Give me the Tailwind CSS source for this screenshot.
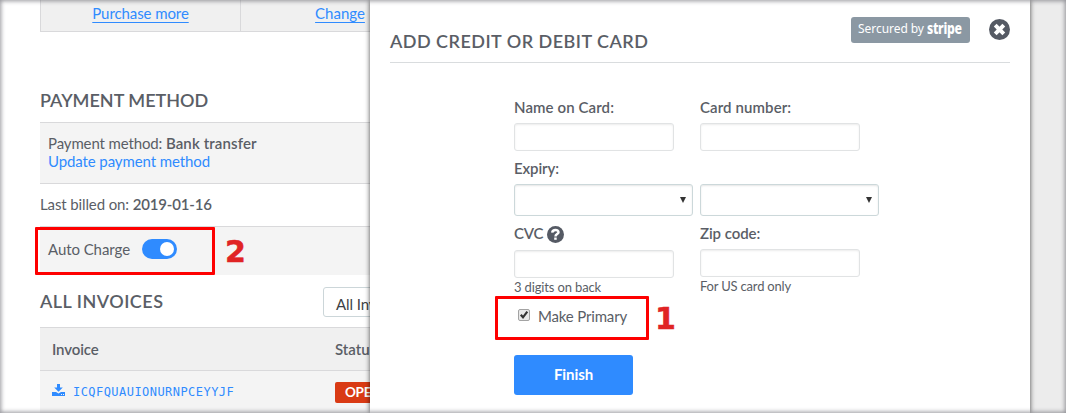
<!DOCTYPE html>
<html lang="en">
<head>
<meta charset="utf-8">
<title>Billing</title>
<script src="https://cdn.jsdelivr.net/npm/@tailwindcss/browser@4"></script>
</head>
<body class="relative h-[413px] w-[1066px] overflow-hidden bg-white font-['Lato',sans-serif] text-[15px] leading-[18px] text-[#5a5e66]">

<!-- Billing page -->
<main class="flex h-full flex-col pl-10 *:shrink-0">
  <div class="flex h-8 border-b border-l border-[#d9d9db] bg-[#f0f0f0] text-[#2f8bff]">
    <div class="flex w-[200px] justify-center border-r border-[#d9d9db] pt-1"><a class="tracking-[-0.09px] underline underline-offset-3 [text-decoration-skip-ink:none]">Purchase more</a></div>
    <div class="flex w-[198px] justify-center pt-1"><a class="underline underline-offset-3 [text-decoration-skip-ink:none]">Change</a></div>
  </div>

  <h2 class="mt-[58px] h-8 text-[18px] leading-5 font-semibold">PAYMENT METHOD</h2>
  <section class="flex h-[62px] flex-col border-y border-[#d9d9db] bg-[#f4f4f4] pt-[11px] pl-2">
    <p class="tracking-[-0.13px]">Payment method: <b class="font-semibold tracking-[0.12px]">Bank transfer</b></p>
    <a class="tracking-[-0.1px] text-[#2f8bff]">Update payment method</a>
  </section>
  <p class="h-[42px] pt-[11px] tracking-[-0.12px]">Last billed on: <b class="font-semibold tracking-[-0.16px]">2019-01-16</b></p>
  <section class="flex h-[49px] items-start gap-3 border-t border-[#d9d9db] bg-[#f4f4f4] pt-3 pl-2">
    <span class="pt-px tracking-[-0.07px]">Auto Charge</span>
    <span class="flex h-5 w-[35px] items-center justify-end rounded-full bg-[#2f8bff] pr-[3px]"><span class="size-[14px] rounded-full bg-white"></span></span>
  </section>

  <div class="flex h-[52px] pt-3">
    <h2 class="w-[283px] pt-1 text-[18px] leading-5 font-semibold tracking-[0.48px]">ALL INVOICES</h2>
    <div class="h-[30px] w-[150px] rounded-[3px] border border-[#ccd6d9] bg-white pt-[7px] pl-3 tracking-[-0.1px] text-[#3c3f45]">All Invoices</div>
  </div>
  <div class="flex h-11 items-center border-y border-[#d9d9db] bg-[#f0f0f0] pb-px pl-3 font-semibold">
    <span class="w-[283px] tracking-[-0.1px]">Invoice</span><span>Status</span>
  </div>
  <div class="flex h-[42px] items-start bg-[#f4f4f4] pt-[11px] pl-3">
    <svg class="mt-[2px] h-[12px] w-[13px] fill-[#2f8bff]" viewBox="0 0 13 12"><path d="M5 0h3v3.500h2.800L6.500 7.700 2.200 3.500H5z"/><path d="M0 8h4l2.500 1.600L9 8h4v4H0zM9 10v1h1v-1zm2 0v1h1v-1z" fill-rule="evenodd"/></svg>
    <span class="w-[270px] pt-px pl-[8px] font-['DejaVu_Sans_Mono',monospace] text-[12px] tracking-[0.45px] text-[#2f8bff]">ICQFQUAUIONURNPCEYYJF</span>
    <span class="h-[21px] w-[60px] rounded-[2px] bg-[#d93a14] pt-px pl-[10px] text-[13.500px] font-bold tracking-[-0.3px] text-white">OPEN</span>
  </div>
</main>

<!-- Page edge behind the dialog -->
<div class="absolute inset-y-0 right-0 w-9 bg-[#ececec]"></div>

<!-- Card dialog -->
<section class="absolute inset-y-0 left-[370px] flex w-[660px] flex-col bg-white px-5 shadow-[0_0_5px_rgba(0,0,0,0.7)]">
  <header class="flex h-[63px] items-start border-b border-[#d9dcde]">
    <h2 class="w-[461px] pt-[31px] text-[18px] leading-5 font-semibold tracking-[0.47px]">ADD CREDIT OR DEBIT CARD</h2>
    <span class="mt-[17px] flex h-[26px] w-[119px] rounded-[3px] bg-[#8b98a3] pt-[3px] pl-[7px] font-['Noto_Sans',sans-serif] text-[12px] tracking-[-0.05px] whitespace-nowrap text-white">Sercured by <b class="ml-[3px] origin-left scale-x-[0.82] text-[15px] leading-[17px] font-extrabold tracking-[-0.4px]">stripe</b></span>
    <svg class="mt-[19px] ml-[19px] size-[21px]" viewBox="0 0 21 21"><circle cx="10.500" cy="10.500" r="10.500" fill="#555a64"/><path d="M6.200 6.200l8.600 8.600M14.800 6.200l-8.600 8.600" stroke="#fff" stroke-width="4"/></svg>
  </header>

  <form class="flex flex-col pt-[35px] pl-[124px]">
    <div class="flex h-[61px] gap-[26px] font-semibold">
      <label class="w-[160px] tracking-[0.1px]">Name on Card:<span class="mt-[7px] block h-7 rounded-[3px] border border-[#e1e3e4] bg-white shadow-[inset_0_1px_2px_rgba(0,0,0,0.08)]"></span></label>
      <label class="w-[160px] tracking-[0.1px]">Card number:<span class="mt-[7px] block h-7 rounded-[3px] border border-[#e1e3e4] bg-white shadow-[inset_0_1px_2px_rgba(0,0,0,0.08)]"></span></label>
    </div>
    <span class="h-[25px] font-semibold tracking-[-0.1px]">Expiry:</span>
    <div class="flex h-10 gap-[7px]">
      <span class="flex h-8 w-[179px] items-center justify-end rounded-[3px] border border-[#ccd8da] pr-[6px] shadow-[inset_0_1px_2px_rgba(0,0,0,0.1)]"><svg class="h-[6px] w-[6px] fill-[#333]" viewBox="0 0 6 6"><path d="M0 0h6L3 6z"/></svg></span>
      <span class="flex h-8 w-[179px] items-center justify-end rounded-[3px] border border-[#ccd8da] pr-[6px] shadow-[inset_0_1px_2px_rgba(0,0,0,0.1)]"><svg class="h-[6px] w-[6px] fill-[#333]" viewBox="0 0 6 6"><path d="M0 0h6L3 6z"/></svg></span>
    </div>
    <div class="flex h-20 gap-[26px]">
      <div class="flex w-[160px] flex-col">
        <label class="flex h-[26px] gap-1 font-semibold tracking-[-0.25px]">CVC
          <svg class="mt-[2px] size-[17px]" viewBox="0 0 17 17"><circle cx="8.500" cy="8.500" r="8.500" fill="#555a64"/><path d="M5.200 6.600C5.600 3.100 11.500 3.300 11.500 6.300C11.500 8.200 8.500 8 8.500 10.500" fill="none" stroke="#fff" stroke-width="2.500"/><path d="M7.200 11.500h2.500v2.300h-2.500z" fill="#fff"/></svg></label>
        <span class="h-7 rounded-[3px] border border-[#e1e3e4] bg-white shadow-[inset_0_1px_2px_rgba(0,0,0,0.08)]"></span>
        <span class="text-[13px] tracking-[-0.14px]">3 digits on back</span>
      </div>
      <div class="flex w-[160px] flex-col">
        <label class="h-[25px] font-semibold tracking-[-0.07px]">Zip code:</label>
        <span class="h-7 rounded-[3px] border border-[#e1e3e4] bg-white shadow-[inset_0_1px_2px_rgba(0,0,0,0.08)]"></span>
        <span class="text-[13px] tracking-[-0.19px]">For US card only</span>
      </div>
    </div>
    <label class="flex h-[51px] pt-[3px] pl-1">
      <svg class="mt-[2px] size-[12px]" viewBox="0 0 12 12"><rect x=".5" y=".5" width="11" height="11" rx="1.500" fill="#e8e8e8" stroke="#a3a3a3"/><path d="M2.800 5.800l2.200 2.500 4.300-5.600" fill="none" stroke="#333" stroke-width="2.200"/></svg>
      <span class="pl-2 tracking-[-0.17px]">Make Primary</span>
    </label>
    <button type="button" class="h-10 w-[119px] rounded-[3px] bg-[#2f8bff] pb-[2px] font-bold tracking-[-0.1px] text-white">Finish</button>
  </form>
</section>

<!-- Numbered callouts -->
<div class="absolute top-[227px] left-[35px] h-12 w-[180px] rounded-[1px] border-3 border-[#fe0000]"></div>
<div class="absolute top-[234px] left-[225px] font-['DejaVu_Sans',sans-serif] text-[30px] leading-9 font-bold text-[#e02424] [-webkit-text-stroke:0.5px_#e02424]">2</div>
<div class="absolute top-[296px] left-[495px] h-11 w-[154px] rounded-[1px] border-3 border-[#fe0000]"></div>
<div class="absolute top-[301px] left-[655px] font-['DejaVu_Sans',sans-serif] text-[30px] leading-9 font-bold text-[#e02424] [-webkit-text-stroke:0.5px_#e02424]">1</div>

<!-- Soft frame -->
<div class="pointer-events-none absolute inset-0 shadow-[inset_0_0_4px_1px_rgba(90,90,100,0.65)]"></div>
</body>
</html>
